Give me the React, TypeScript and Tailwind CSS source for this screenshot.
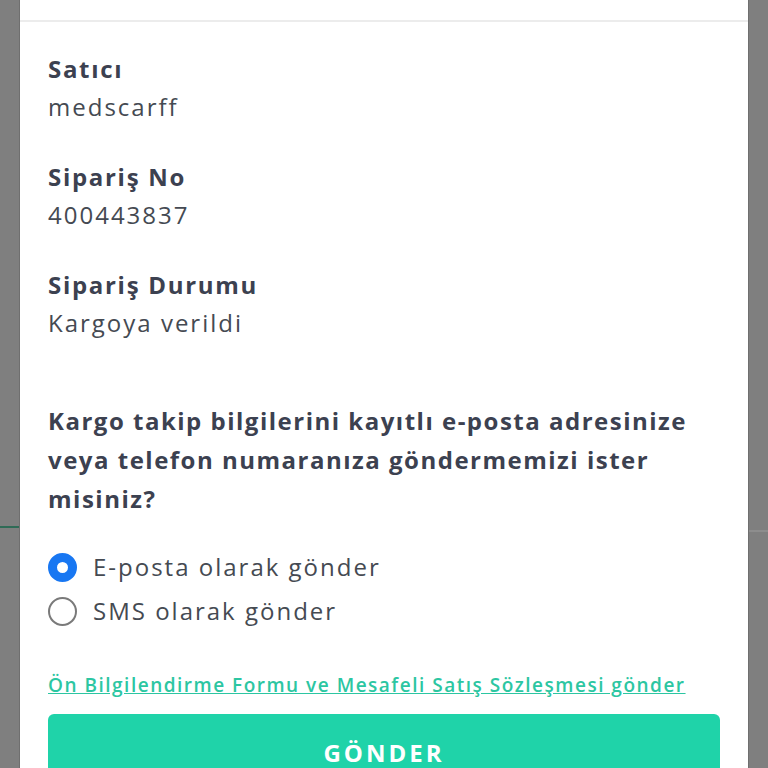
import React from "react";

const font = { fontFamily: '"Open Sans", "DejaVu Sans", sans-serif' };

interface InfoRowProps {
  label: string;
  value: string;
}

const InfoRow = ({ label, value }: InfoRowProps) => (
  <div className="flex flex-col">
    <span className="text-[24px] leading-[38px] font-bold tracking-[1.7px] text-[#3c4150]">{label}</span>
    <span className="text-[24px] leading-[38px] tracking-[2px] text-[#454a52]">{value}</span>
  </div>
);

const Radio = ({ checked, label }: { checked: boolean; label: string }) => (
  <label className="flex items-center gap-[16px] h-[44px]">
    {checked ? (
      <span className="w-[29px] h-[29px] rounded-full border-[9px] border-[#1877f2] bg-white" />
    ) : (
      <span className="w-[29px] h-[29px] rounded-full border-[2.5px] border-[#7a7a7a] bg-white" />
    )}
    <span className="text-[24px] tracking-[2px] text-[#454a52]">{label}</span>
  </label>
);

export default function App() {
  return (
    <div className="h-[768px] w-[768px] overflow-hidden bg-[#7f7f7f] flex" style={font}>
      {/* background page edge */}
      <div className="w-[19px] flex flex-col">
        <div className="h-[526px] shrink-0" />
        <div className="h-[2px] shrink-0 bg-[#2f6b56]" />
      </div>

      {/* Modal */}
      <div className="w-[730px] bg-white flex flex-col border-x border-[#6f6f6f]">
        <div className="h-[22px] shrink-0 border-b-2 border-[#ececec]" />

        <div className="shrink-0 flex flex-col px-[28px] pt-[28px]">
          <div className="flex flex-col gap-[32px]">
            <InfoRow label="Satıcı" value="medscarff" />
            <InfoRow label="Sipariş No" value="400443837" />
            <InfoRow label="Sipariş Durumu" value="Kargoya verildi" />
          </div>

          <p className="mt-[59px] text-[24px] leading-[39px] font-bold tracking-[1.5px] text-[#3c4150]">
            Kargo takip bilgilerini kayıtlı e-posta adresinize veya telefon numaranıza göndermemizi ister misiniz?
          </p>

          <div className="mt-[27px] flex flex-col">
            <Radio checked label="E-posta olarak gönder" />
            <Radio checked={false} label="SMS olarak gönder" />
          </div>

          <a className="mt-[39px] text-[19px] leading-[26px] font-semibold tracking-[1.5px] text-[#2cc6a2] underline">
            Ön Bilgilendirme Formu ve Mesafeli Satış Sözleşmesi gönder
          </a>

          <button className="mt-[16px] h-[78px] shrink-0 rounded-[6px] bg-[#1fd3a9] text-white text-[24px] font-bold tracking-[3px]">
            GÖNDER
          </button>
        </div>
      </div>

      <div className="w-[19px] flex flex-col">
        <div className="h-[530px] shrink-0" />
        <div className="h-[2px] shrink-0 bg-[#8d8d8d]" />
      </div>
    </div>
  );
}
